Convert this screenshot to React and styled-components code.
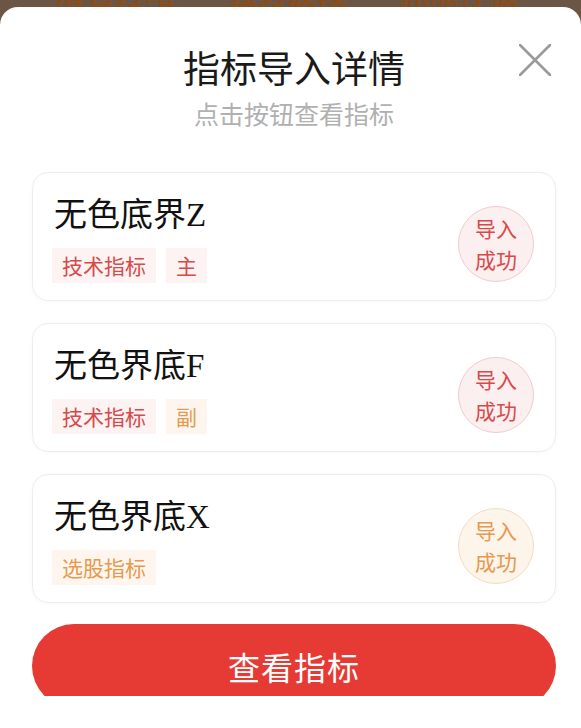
import React from 'react'
import styled, { createGlobalStyle } from 'styled-components'

const GlobalStyle = createGlobalStyle`
  html, body {
    margin: 0;
    padding: 0;
    background: #6b5646;
  }
  body {
    font-family: "Noto Sans CJK SC", "Noto Sans", sans-serif;
  }
`

const COLORS = {
  red: '#d8494a',
  redBg: '#fdf3f3',
  redCircle: '#fcefef',
  redBorder: '#f0cccc',
  orange: '#e6994f',
  orangeBg: '#fef6ee',
  orangeCircle: '#fdf4ea',
  orangeBorder: '#f3dcc3',
  button: '#e63b34',
}

const Page = styled.div`
  width: 581px;
  height: 728px;
  overflow: hidden;
  background: #6b5646;
`

const BackStrip = styled.div`
  height: 7px;
  overflow: hidden;
  display: flex;
  padding-left: 55px;
  gap: 52px;
`

const BackText = styled.span`
  font-size: 30px;
  line-height: 30px;
  margin-top: -24px;
  font-weight: 700;
  color: #8a4d1c;
  white-space: nowrap;
`

const Modal = styled.div`
  background: #fff;
  border-radius: 18px 18px 0 0;
  height: 721px;
  padding: 36px 25px 0 32px;
  box-sizing: border-box;
  position: relative;
`

const Header = styled.header`
  display: flex;
  flex-direction: column;
  align-items: center;
`

const Title = styled.h1`
  margin: 0;
  font-size: 37px;
  line-height: 48px;
  font-weight: 400;
  color: #1a1a1a;
`

const Subtitle = styled.p`
  margin: 6px 0 0;
  font-size: 25px;
  line-height: 32px;
  color: #b0b0b0;
`

const CloseButton = styled.button`
  position: absolute;
  top: 37px;
  right: 30px;
  width: 32px;
  height: 32px;
  padding: 0;
  border: none;
  background: none;
`

const List = styled.div`
  display: flex;
  flex-direction: column;
  gap: 22px;
  margin-top: 43px;
`

const Card = styled.div`
  display: flex;
  align-items: center;
  justify-content: space-between;
  height: 129px;
  box-sizing: border-box;
  padding: 21px 21px 18px 19px;
  border: 1px solid #ededed;
  border-radius: 16px;
  box-shadow: 0 1px 4px rgba(0, 0, 0, 0.03);
`

const Info = styled.div`
  display: flex;
  flex-direction: column;
  gap: 12px;
`

const Name = styled.div`
  font-family: "Liberation Serif", "Noto Sans CJK SC", serif;
  font-size: 33px;
  line-height: 42px;
  padding-left: 2px;
  color: #111;
`

const Tags = styled.div`
  display: flex;
  gap: 10px;
`

const Tag = styled.span`
  height: 35px;
  line-height: 35px;
  padding: 0 10px;
  font-size: 21px;
  color: ${({ tone }) => (tone === 'orange' ? COLORS.orange : COLORS.red)};
  background: ${({ tone }) => (tone === 'orange' ? COLORS.orangeBg : COLORS.redBg)};
`

const Status = styled.div`
  width: 76px;
  height: 76px;
  margin-top: 12px;
  border-radius: 50%;
  box-sizing: border-box;
  display: flex;
  flex-direction: column;
  align-items: center;
  justify-content: center;
  font-size: 21px;
  line-height: 31px;
  color: ${({ tone }) => (tone === 'orange' ? COLORS.orange : COLORS.red)};
  background: ${({ tone }) => (tone === 'orange' ? COLORS.orangeCircle : COLORS.redCircle)};
  border: 1px solid ${({ tone }) => (tone === 'orange' ? COLORS.orangeBorder : COLORS.redBorder)};
`

const ButtonClip = styled.div`
  margin-top: 21px;
  height: 72px;
  overflow: hidden;
`

const MainButton = styled.button`
  width: 100%;
  height: 84px;
  border: none;
  border-radius: 42px;
  background: ${COLORS.button};
  color: #fff;
  font-family: "Noto Sans CJK SC", sans-serif;
  font-size: 32px;
  letter-spacing: 1px;
`

const items = [
  { name: '无色底界Z', tags: [{ text: '技术指标', tone: 'red' }, { text: '主', tone: 'red' }], tone: 'red' },
  { name: '无色界底F', tags: [{ text: '技术指标', tone: 'red' }, { text: '副', tone: 'orange' }], tone: 'red' },
  { name: '无色界底X', tags: [{ text: '选股指标', tone: 'orange' }], tone: 'orange' },
]

export default function App() {
  return (
    <Page>
      <GlobalStyle />
      <BackStrip>
        <BackText>清仓方略</BackText>
        <BackText>强势波段</BackText>
        <BackText>抓涨停板</BackText>
      </BackStrip>
      <Modal>
        <CloseButton aria-label="close">
          <svg width="32" height="32" viewBox="0 0 32 32">
            <path d="M1 1 L31 31 M31 1 L1 31" stroke="#9a9a9a" strokeWidth="2.6" strokeLinecap="round" />
          </svg>
        </CloseButton>
        <Header>
          <Title>指标导入详情</Title>
          <Subtitle>点击按钮查看指标</Subtitle>
        </Header>
        <List>
          {items.map((item) => (
            <Card key={item.name}>
              <Info>
                <Name>{item.name}</Name>
                <Tags>
                  {item.tags.map((tag) => (
                    <Tag key={tag.text} tone={tag.tone}>
                      {tag.text}
                    </Tag>
                  ))}
                </Tags>
              </Info>
              <Status tone={item.tone}>
                <span>导入</span>
                <span>成功</span>
              </Status>
            </Card>
          ))}
        </List>
        <ButtonClip>
          <MainButton>查看指标</MainButton>
        </ButtonClip>
      </Modal>
    </Page>
  )
}
